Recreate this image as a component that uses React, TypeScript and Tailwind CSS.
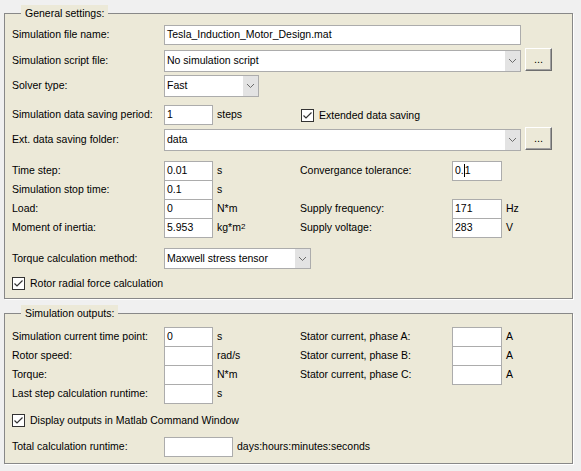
import React from "react";

const font = "font-['Liberation_Sans',Arial,sans-serif]";

function Chevron() {
  return (
    <svg width="9" height="6" viewBox="0 0 9 6" className="block">
      <polyline points="1,1 4.5,4.5 8,1" fill="none" stroke="#6b6b6b" strokeWidth="1" />
    </svg>
  );
}

function Select({ value, w, h }: { value: string; w: string; h: string }) {
  return (
    <div className={`${w} ${h} flex border border-[#acacac] bg-white`}>
      <div className="flex-1 pl-[2px] flex items-center text-[10.5px] text-black whitespace-nowrap overflow-hidden">
        {value}
      </div>
      <div className="w-[15px] bg-[#e3e3e3] flex items-center justify-center">
        <Chevron />
      </div>
    </div>
  );
}

function Dots() {
  return (
    <div className="ml-[4px] w-[27px] h-[23px] bg-[#ece9d8] border-t border-l border-t-white border-l-white border-b border-r border-b-[#6e6e6e] border-r-[#6e6e6e] shadow-[inset_-1px_-1px_0_#a0a0a0] flex items-center justify-center text-[11px] text-black pb-[1px]">
      ...
    </div>
  );
}

function Box({ w, value, children }: { w: string; value?: string; children?: React.ReactNode }) {
  return (
    <div className={`${w} h-[20px] shrink-0 border border-[#acacac] bg-white flex items-center pl-[2px] text-[10.5px] text-black`}>
      {value}
      {children}
    </div>
  );
}

function Check({ label }: { label: string }) {
  return (
    <div className="flex items-center h-[13px]">
      <div className="w-[13px] h-[13px] border border-[#333333] bg-white flex items-center justify-center">
        <svg width="11" height="11" viewBox="0 0 11 11" className="block">
          <polyline points="1.5,5.5 4,8 9.5,2.5" fill="none" stroke="#333333" strokeWidth="1.2" />
        </svg>
      </div>
      <span className="ml-[5px] text-[10.5px] leading-[13px] text-black">{label}</span>
    </div>
  );
}

function Label({ children, w = "w-[152px]" }: { children: React.ReactNode; w?: string }) {
  return <div className={`${w} shrink-0 text-[10.5px] text-black whitespace-nowrap`}>{children}</div>;
}

function Pair({
  label,
  value,
  unit,
  leftW = "w-[49px]",
}: {
  label: string;
  value?: string;
  unit?: React.ReactNode;
  leftW?: string;
}) {
  return (
    <div className="w-[288px] flex items-center h-[19px]">
      <Label>{label}</Label>
      <Box w={leftW} value={value} />
      <span className="pl-[4px] text-[10.5px] text-black whitespace-nowrap">{unit}</span>
    </div>
  );
}

function RightPair({ label, value, unit, children }: { label: string; value?: string; unit?: string; children?: React.ReactNode }) {
  return (
    <div className="flex items-center h-[19px]">
      <Label>{label}</Label>
      <Box w="w-[50px]" value={value}>
        {children}
      </Box>
      <span className="pl-[4px] text-[10.5px] text-black">{unit}</span>
    </div>
  );
}

function Legend({ children }: { children: React.ReactNode }) {
  return (
    <legend className="ml-[9px] px-[4px] bg-[#ece9d8] text-[10.5px] leading-[16px] text-black">{children}</legend>
  );
}

export default function App() {
  return (
    <div className={`${font} w-[581px] h-[471px] bg-[#f0f0f0] pt-[5px] overflow-hidden`}>
      <fieldset className="ml-[4px] w-[569px] h-[294px] border border-[#888888] bg-[#ece9d8] px-[7px] shadow-[1px_1px_0_#ffffff]">
        <Legend>General settings:</Legend>
        <div className="mt-[4px] flex items-center h-[20px]">
          <Label>Simulation file name:</Label>
          <Box w="w-[357px]" value="Tesla_Induction_Motor_Design.mat" />
        </div>
        <div className="mt-[3px] flex items-start h-[24px]">
          <div className="w-[152px] mt-[5px] text-[10.5px] text-black">Simulation script file:</div>
          <div className="mt-[2px]">
            <Select value="No simulation script" w="w-[357px]" h="h-[22px]" />
          </div>
          <Dots />
        </div>
        <div className="mt-[3px] flex items-center h-[22px]">
          <Label>Solver type:</Label>
          <Select value="Fast" w="w-[95px]" h="h-[22px]" />
        </div>
        <div className="mt-[8px] flex items-center h-[20px]">
          <Pair label="Simulation data saving period:" value="1" unit="steps" />
          <div className="ml-[1px]">
            <Check label="Extended data saving" />
          </div>
        </div>
        <div className="mt-[2px] flex items-start h-[24px]">
          <div className="w-[152px] mt-[5px] text-[10.5px] text-black">Ext. data saving folder:</div>
          <div className="mt-[2px]">
            <Select value="data" w="w-[357px]" h="h-[22px]" />
          </div>
          <Dots />
        </div>
        <div className="mt-[10px] flex flex-col">
          <div className="flex">
            <Pair label="Time step:" value="0.01" unit="s" />
            <RightPair label="Convergance tolerance:">
              <span>0.</span>
              <span className="inline-block w-px h-[13px] bg-black" />
              <span>1</span>
            </RightPair>
          </div>
          <div className="flex">
            <Pair label="Simulation stop time:" value="0.1" unit="s" />
          </div>
          <div className="flex">
            <Pair label="Load:" value="0" unit="N*m" />
            <RightPair label="Supply frequency:" value="171" unit="Hz" />
          </div>
          <div className="flex">
            <Pair
              label="Moment of inertia:"
              value="5.953"
              unit={
                <span>
                  kg*m<sup className="text-[8px] relative -top-[2px]">2</sup>
                </span>
              }
            />
            <RightPair label="Supply voltage:" value="283" unit="V" />
          </div>
        </div>
        <div className="mt-[11px] flex items-center h-[21px]">
          <Label>Torque calculation method:</Label>
          <Select value="Maxwell stress tensor" w="w-[147px]" h="h-[21px]" />
        </div>
        <div className="mt-[8px]">
          <Check label="Rotor radial force calculation" />
        </div>
      </fieldset>

      <fieldset className="mt-[6px] ml-[4px] w-[569px] h-[159px] border border-[#888888] bg-[#ece9d8] px-[7px] shadow-[1px_1px_0_#ffffff]">
        <Legend>Simulation outputs:</Legend>
        <div className="mt-[6px] flex flex-col">
          <div className="flex">
            <Pair label="Simulation current time point:" value="0" unit="s" />
            <RightPair label="Stator current, phase A:" unit="A" />
          </div>
          <div className="flex">
            <Pair label="Rotor speed:" unit="rad/s" />
            <RightPair label="Stator current, phase B:" unit="A" />
          </div>
          <div className="flex">
            <Pair label="Torque:" unit="N*m" />
            <RightPair label="Stator current, phase C:" unit="A" />
          </div>
          <div className="flex">
            <Pair label="Last step calculation runtime:" unit="s" />
          </div>
        </div>
        <div className="mt-[11px]">
          <Check label="Display outputs in Matlab Command Window" />
        </div>
        <div className="mt-[10px] flex items-center h-[20px]">
          <Label>Total calculation runtime:</Label>
          <Box w="w-[69px]" />
          <span className="pl-[4px] text-[10.5px] text-black">days:hours:minutes:seconds</span>
        </div>
      </fieldset>
    </div>
  );
}
